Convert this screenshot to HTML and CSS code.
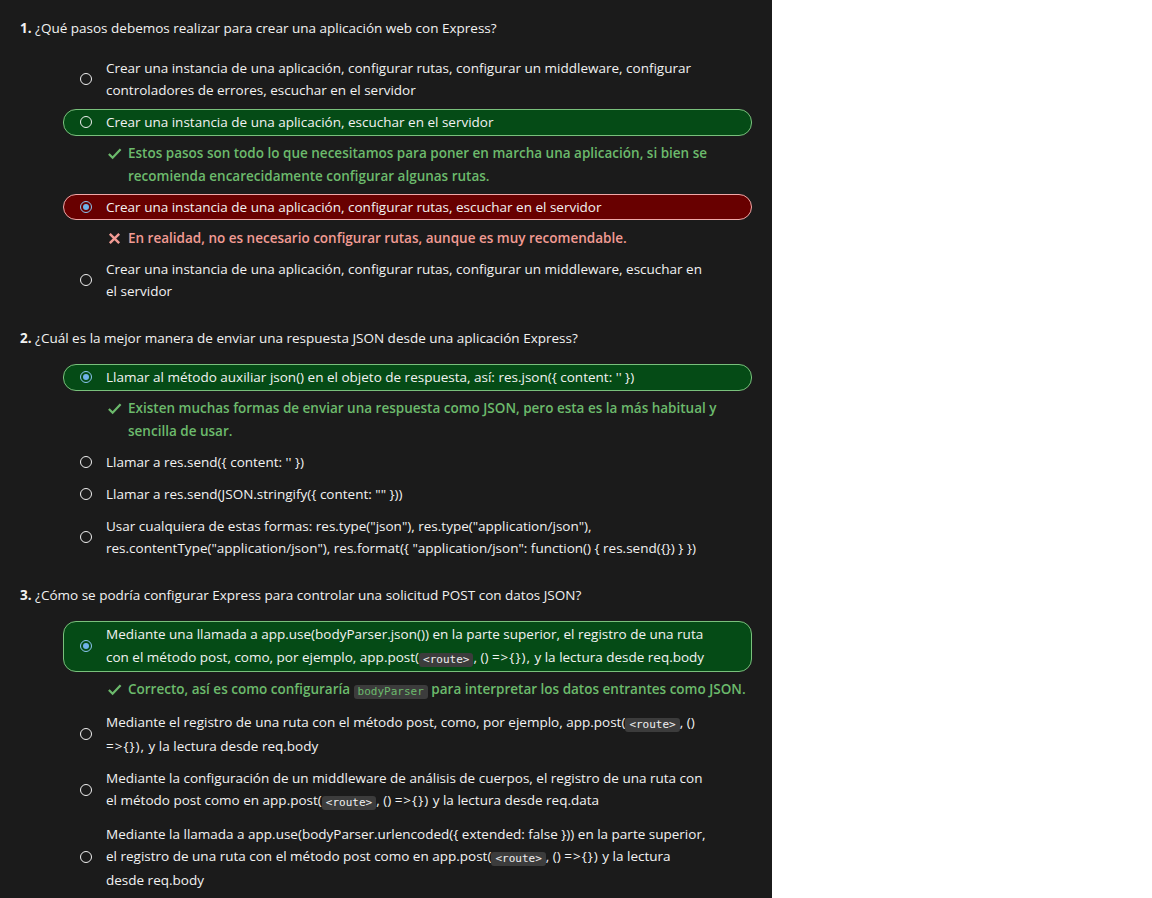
FILE: index.html
```html
<!DOCTYPE html>
<html lang="es">
<head>
<meta charset="utf-8">
<title>Cuestionario Express</title>
<link rel="stylesheet" href="styles.css">
</head>
<body>
<main class="panel">
  <section class="question">
    <h2 class="q-title"><b>1.</b> ¿Qué pasos debemos realizar para crear una aplicación web con Express?</h2>
    <ul class="options">
      <li class="opt"><span class="radio"></span><span class="opt-text">Crear una instancia de una aplicación, configurar rutas, configurar un middleware, configurar controladores de errores, escuchar en el servidor</span></li>
      <li class="opt correct"><span class="radio"></span><span class="opt-text">Crear una instancia de una aplicación, escuchar en el servidor</span></li>
      <li class="feedback ok"><svg class="fb-icon" viewBox="0 0 16 16"><path d="M2 8.5l4 4L14.5 3.5" fill="none" stroke="currentColor" stroke-width="2.4"/></svg><span class="fb-text">Estos pasos son todo lo que necesitamos para poner en marcha una aplicación, si bien se recomienda encarecidamente configurar algunas rutas.</span></li>
      <li class="opt wrong"><span class="radio checked"></span><span class="opt-text">Crear una instancia de una aplicación, configurar rutas, escuchar en el servidor</span></li>
      <li class="feedback bad"><svg class="fb-icon" viewBox="0 0 16 16"><path d="M3 3l10 10M13 3L3 13" fill="none" stroke="currentColor" stroke-width="2.6"/></svg><span class="fb-text">En realidad, no es necesario configurar rutas, aunque es muy recomendable.</span></li>
      <li class="opt"><span class="radio"></span><span class="opt-text">Crear una instancia de una aplicación, configurar rutas, configurar un middleware, escuchar en el servidor</span></li>
    </ul>
  </section>

  <section class="question">
    <h2 class="q-title"><b>2.</b> ¿Cuál es la mejor manera de enviar una respuesta JSON desde una aplicación Express?</h2>
    <ul class="options">
      <li class="opt correct"><span class="radio checked"></span><span class="opt-text">Llamar al método auxiliar json() en el objeto de respuesta, así: res.json({ content: '' })</span></li>
      <li class="feedback ok"><svg class="fb-icon" viewBox="0 0 16 16"><path d="M2 8.5l4 4L14.5 3.5" fill="none" stroke="currentColor" stroke-width="2.4"/></svg><span class="fb-text">Existen muchas formas de enviar una respuesta como JSON, pero esta es la más habitual y sencilla de usar.</span></li>
      <li class="opt"><span class="radio"></span><span class="opt-text">Llamar a res.send({ content: '' })</span></li>
      <li class="opt"><span class="radio"></span><span class="opt-text">Llamar a res.send(JSON.stringify({ content: "" }))</span></li>
      <li class="opt"><span class="radio"></span><span class="opt-text">Usar cualquiera de estas formas: res.type("json"), res.type("application/json"), res.contentType("application/json"), res.format({ "application/json": function() { res.send({}) } })</span></li>
    </ul>
  </section>

  <section class="question">
    <h2 class="q-title"><b>3.</b> ¿Cómo se podría configurar Express para controlar una solicitud POST con datos JSON?</h2>
    <ul class="options">
      <li class="opt correct"><span class="radio checked"></span><span class="opt-text">Mediante una llamada a app.use(bodyParser.json()) en la parte superior, el registro de una ruta con el método post, como, por ejemplo, app.post(<code>&lt;route&gt;</code>, () <span class="arrow">=&gt;{}),</span> y la lectura desde req.body</span></li>
      <li class="feedback ok"><svg class="fb-icon" viewBox="0 0 16 16"><path d="M2 8.5l4 4L14.5 3.5" fill="none" stroke="currentColor" stroke-width="2.4"/></svg><span class="fb-text">Correcto, así es como configuraría <code>bodyParser</code> para interpretar los datos entrantes como JSON.</span></li>
      <li class="opt"><span class="radio"></span><span class="opt-text">Mediante el registro de una ruta con el método post, como, por ejemplo, app.post(<code>&lt;route&gt;</code>, () <span class="arrow">=&gt;{}),</span> y la lectura desde req.body</span></li>
      <li class="opt"><span class="radio"></span><span class="opt-text">Mediante la configuración de un middleware de análisis de cuerpos, el registro de una ruta con el método post como en app.post(<code>&lt;route&gt;</code>, () <span class="arrow">=&gt;{})</span> y la lectura desde req.data</span></li>
      <li class="opt"><span class="radio"></span><span class="opt-text">Mediante la llamada a app.use(bodyParser.urlencoded({ extended: false })) en la parte superior, el registro de una ruta con el método post como en app.post(<code>&lt;route&gt;</code>, () <span class="arrow">=&gt;{})</span> y la lectura desde req.body</span></li>
    </ul>
  </section>
</main>
</body>
</html>
```

FILE: styles.css
```css
html, body {
  margin: 0;
  padding: 0;
  background: #ffffff;
}

body {
  font-family: "Open Sans", "Liberation Sans", sans-serif;
  font-size: 13.5px;
  line-height: 22.5px;
  color: #f2f2f2;
}

.panel {
  width: 772px;
  min-height: 898px;
  box-sizing: border-box;
  background: #1b1b1b;
  padding: 17px 20px 0 20px;
}

.question {
  margin-bottom: 22px;
}

.q-title {
  margin: 0 0 15px 0;
  font-size: inherit;
  font-weight: normal;
  line-height: 22.5px;
}

.q-title b {
  font-weight: 700;
}

.options {
  list-style: none;
  margin: 0;
  padding: 0 0 0 43px;
  display: flex;
  flex-direction: column;
  gap: 5.5px;
}

.opt {
  display: flex;
  align-items: center;
  gap: 14px;
  padding: 1px 42px 1px 16px;
  border: 1px solid transparent;
  border-radius: 13px;
}

.opt.correct {
  background: #054b16;
  border-color: #79c07c;
}

.opt.wrong {
  background: #680000;
  border-color: #f0a8a8;
}

.radio {
  flex: none;
  width: 10px;
  height: 10px;
  border: 1.6px solid #f0f0f0;
  border-radius: 50%;
  box-sizing: content-box;
  position: relative;
}

.radio.checked {
  border-color: #8cc6f2;
}

.radio.checked::after {
  content: "";
  position: absolute;
  left: 2px;
  top: 2px;
  width: 6px;
  height: 6px;
  border-radius: 50%;
  background: #6fb2ea;
}

.opt-text {
  flex: 1;
}

.arrow {
  white-space: nowrap;
  letter-spacing: 1px;
}

.feedback {
  display: flex;
  align-items: flex-start;
  gap: 6px;
  padding: 1px 4px 1px 44px;
  font-weight: 600;
}

.feedback.ok {
  color: #6cba6c;
}

.feedback.bad {
  color: #f29b94;
}

.fb-icon {
  flex: none;
  width: 15px;
  height: 15px;
  margin-top: 4px;
}

.fb-text {
  flex: 1;
}

code {
  display: inline-block;
  font-family: "DejaVu Sans Mono", "Liberation Mono", monospace;
  font-size: 11px;
  line-height: 13px;
  vertical-align: -1px;
  background: #3c3c3c;
  border-radius: 3px;
  padding: 0 4px 1px;
  margin: 0 0 3px;
  color: #f0f0f0;
  letter-spacing: 0;
}

.feedback code {
  color: #6cba6c;
  font-weight: 400;
}
```
